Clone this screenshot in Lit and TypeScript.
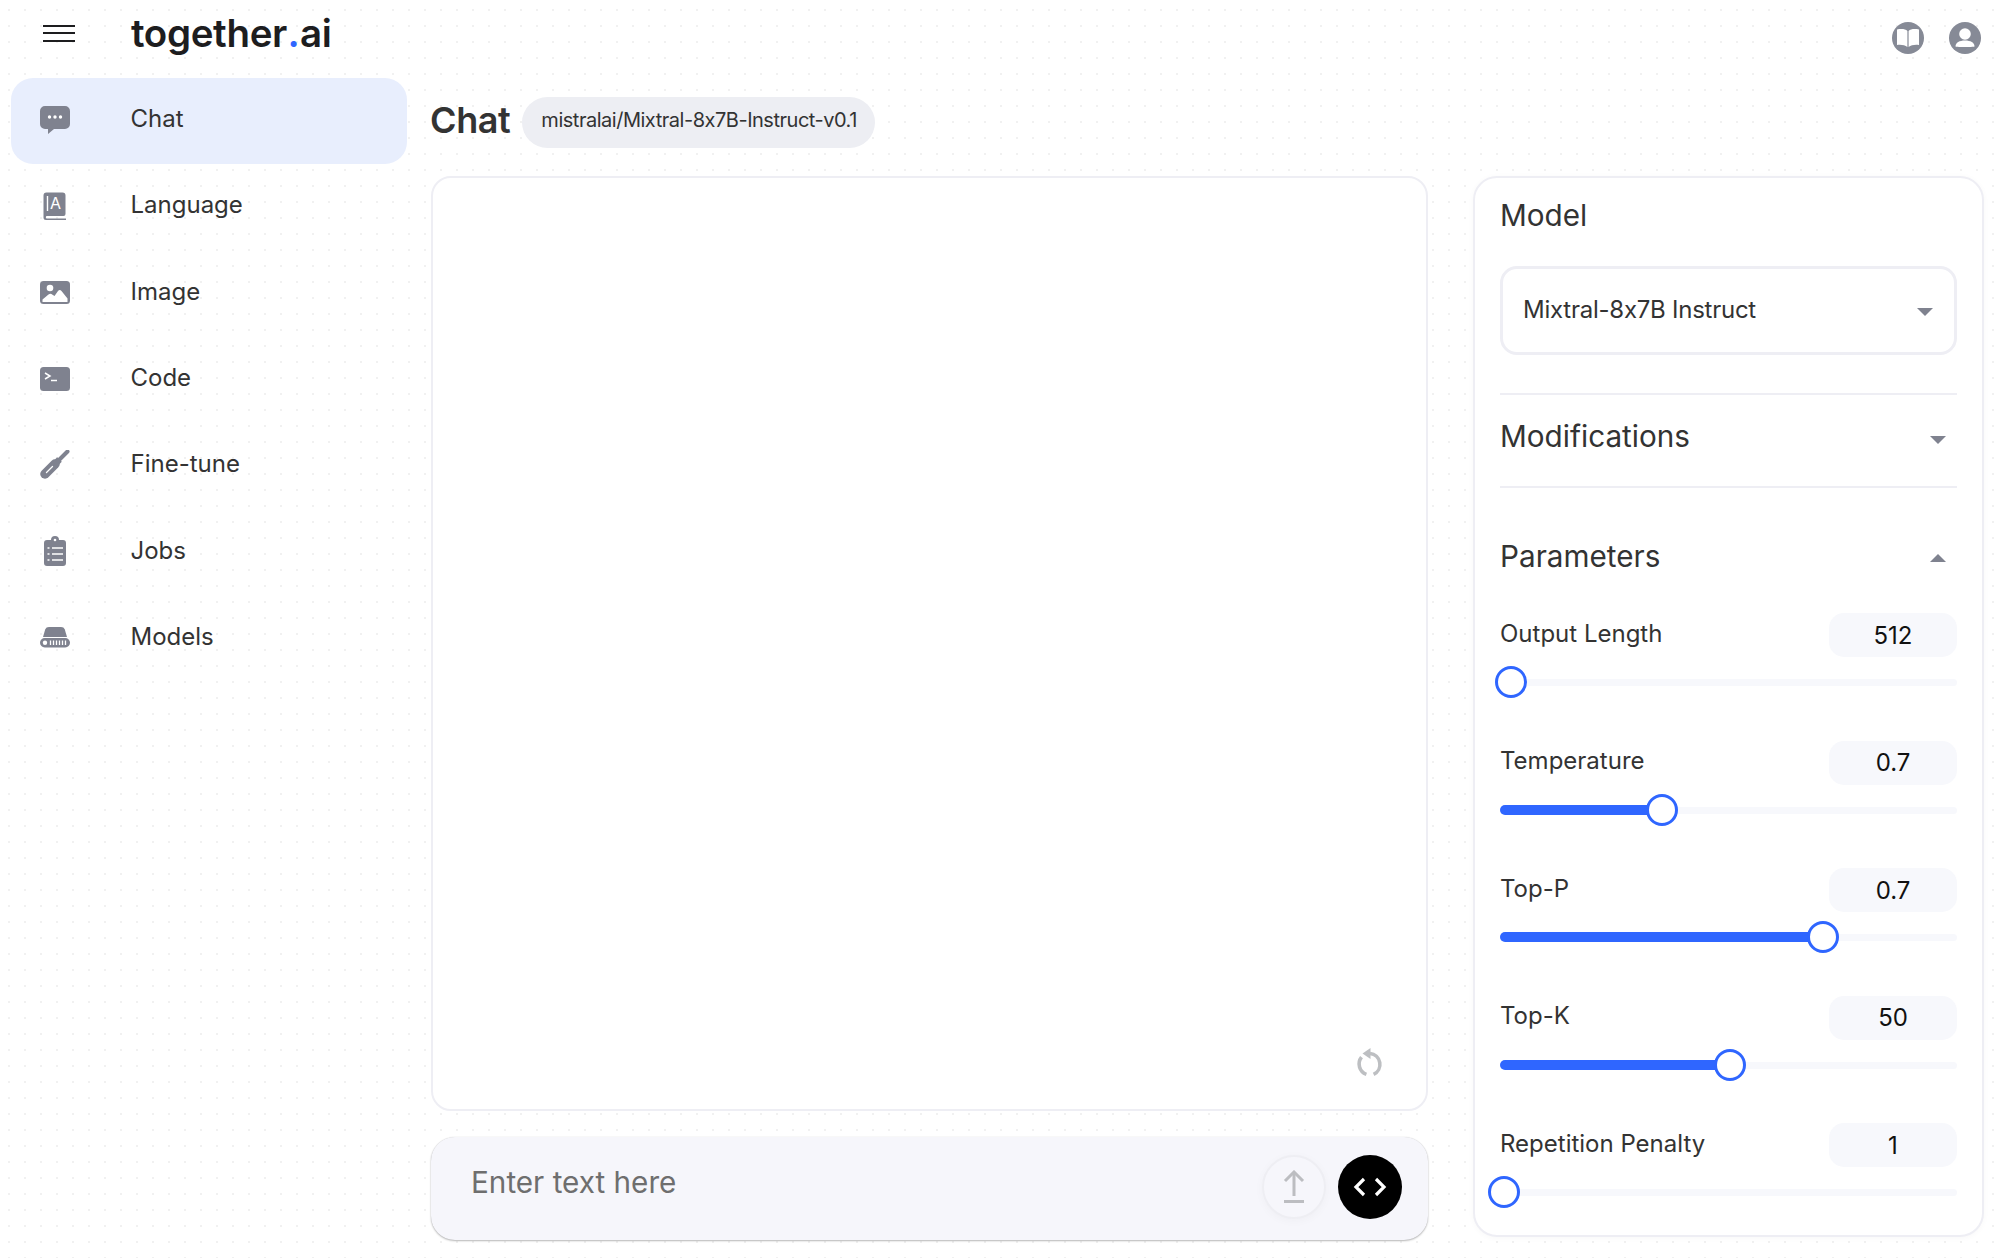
import { LitElement, html, css, svg } from "lit";
import { customElement } from "lit/decorators.js";

const icons: Record<string, unknown> = {
  chat: svg`<svg class="ico" viewBox="0 0 30 30"><path d="M5 1h20a5 5 0 0 1 5 5v13a5 5 0 0 1-5 5H14l-6 5v-5H5a5 5 0 0 1-5-5V6a5 5 0 0 1 5-5z" fill="#7f828f"/><g fill="#fff"><circle cx="9.500" cy="12" r="1.700"/><circle cx="15" cy="12" r="1.700"/><circle cx="20.500" cy="12" r="1.700"/></g></svg>`,
  language: svg`<svg class="ico" viewBox="0 0 30 30"><path d="M6.500 1.500h16a3 3 0 0 1 3 3V23a2 2 0 0 1-2 2H7a1.200 1.200 0 0 0 0 2.400h19V29H6a2.500 2.500 0 0 1-2.500-2.500v-22a3 3 0 0 1 3-3z" fill="#7f828f"/><path d="M7.500 5v15" stroke="#fff" stroke-width="1.400"/><text x="15.500" y="18" font-family="Inter" font-size="16" text-anchor="middle" fill="#fff">A</text></svg>`,
  image: svg`<svg class="ico" viewBox="0 0 30 30"><rect y="4" width="30" height="23" rx="3.500" fill="#7f828f"/><circle cx="10" cy="11" r="3.300" fill="#fff"/><path d="M2.500 25v-2.500l6-5c1.500-1 2.500-1 4 .2l2 1.300 3.500-5c1-1.200 2.500-1.200 3.500 0l6 7.500V25z" fill="#fff"/></svg>`,
  code: svg`<svg class="ico" viewBox="0 0 30 30"><rect y="3" width="30" height="24" rx="3.500" fill="#7f828f"/><path d="M5 9l5 3-5 3" fill="none" stroke="#fff" stroke-width="1.500"/><path d="M11 16.500h6" stroke="#fff" stroke-width="1.500"/></svg>`,
  tune: svg`<svg class="ico" viewBox="0 0 30 30"><path d="M5 24l10-10" stroke="#7f828f" stroke-width="9.500" stroke-linecap="round"/><path d="M14 15l5.500-5.500" stroke="#7f828f" stroke-width="6.500"/><path d="M18 11L27.500 1.500" stroke="#7f828f" stroke-width="4" stroke-linecap="round"/><path d="M6.500 22.500l6-6" stroke="#fff" stroke-width="1.300" stroke-linecap="round"/></svg>`,
  jobs: svg`<svg class="ico" viewBox="0 0 30 30"><path d="M7 4h4a4 4 0 0 1 8 0h4a3 3 0 0 1 3 3v20a3 3 0 0 1-3 3H7a3 3 0 0 1-3-3V7a3 3 0 0 1 3-3z" fill="#7f828f"/><circle cx="15" cy="4" r="1.300" fill="#fff"/><g stroke="#fff" stroke-width="1.300"><path d="M7.500 12h2M12 12h11M7.500 18h2M12 18h11M7.500 24h2M12 24h11"/></g></svg>`,
  models: svg`<svg class="ico" viewBox="0 0 30 30"><path d="M9 5h12c2 0 3 .8 3.800 2.500L27 15H3l2.200-7.500C6 5.800 7 5 9 5z" fill="#7f828f"/><rect y="16" width="30" height="9.500" rx="4.700" fill="#7f828f"/><circle cx="5" cy="20.700" r="2.200" fill="#fff"/><path d="M10.500 18.500v4.500M13.500 18.500v4.500M16.500 18.500v4.500M19.500 18.500v4.500M22.500 18.500v4.500M25.500 18.500v4.500" stroke="#fff" stroke-width="1.300"/></svg>`,
};

const nav = [
  ["chat", "Chat"],
  ["language", "Language"],
  ["image", "Image"],
  ["code", "Code"],
  ["tune", "Fine-tune"],
  ["jobs", "Jobs"],
  ["models", "Models"],
];

const params = [
  { label: "Output Length", value: "512", thumb: 11, fill: 0 },
  { label: "Temperature", value: "0.7", thumb: 162, fill: 1 },
  { label: "Top-P", value: "0.7", thumb: 323, fill: 1 },
  { label: "Top-K", value: "50", thumb: 230, fill: 1 },
  { label: "Repetition Penalty", value: "1", thumb: 3.500, fill: 0 },
];

@customElement("app-root")
export class AppRoot extends LitElement {
  static styles = css`
    :host {
      display: flex;
      flex-direction: column;
      width: 2000px;
      height: 1258px;
      overflow: hidden;
      font-family: Inter, "Liberation Sans", sans-serif;
      font-feature-settings: "calt" 0;
      color: #2e2e2e;
      background-color: #fff;
      background-image: radial-gradient(circle, #f1f1f1 1.200px, transparent 1.500px);
      background-size: 16px 16px;
      background-position: 1px 2px;
    }
    .top {
      height: 78px;
      flex: none;
      display: flex;
      align-items: center;
      padding: 0 19px 12px 43px;
      box-sizing: border-box;
    }
    .burger {
      width: 32px;
      display: flex;
      flex-direction: column;
      gap: 5.500px;
    }
    .burger i {
      display: block;
      height: 2px;
      background: #1d1d1f;
    }
    .logo {
      margin-left: 56px;
      font-size: 38.500px;
      font-weight: 600;
      letter-spacing: -0.35px;
      color: #1d1d1f;
      line-height: 46px;
    }
    .logo b {
      font-weight: 600;
      color: #2f66ff;
      margin: 0 0.500px;
    }
    .right {
      margin-left: auto;
      margin-top: 10px;
      display: flex;
      gap: 25px;
    }
    .right svg {
      width: 32px;
      height: 32px;
      display: block;
    }
    .body {
      flex: 1;
      min-height: 0;
      display: flex;
      padding-bottom: 18px;
    }
    .side {
      width: 431px;
      flex: none;
      box-sizing: border-box;
      padding-left: 11px;
    }
    .item {
      width: 396px;
      height: 86.300px;
      display: flex;
      align-items: center;
      border-radius: 22px;
      padding: 0 0 3px 29px;
      box-sizing: border-box;
      font-size: 24px;
      color: #333;
    }
    .item span {
      margin-bottom: 2px;
      margin-left: -0.500px;
    }
    .item.on {
      background: #e8eefd;
    }
    .ico {
      width: 30px;
      height: 30px;
      flex: none;
      margin-right: 61px;
    }
    .content {
      flex: 1;
      min-width: 0;
      display: flex;
      flex-direction: column;
    }
    .head {
      display: flex;
      align-items: center;
      margin-top: 19px;
      height: 51px;
      flex: none;
    }
    h1 {
      margin: 0 0 6px -1px;
      font-size: 36px;
      font-weight: 600;
      color: #333;
      letter-spacing: -0.4px;
    }
    .chip {
      margin-left: 12px;
      height: 51px;
      padding: 0 18px 5px 19px;
      box-sizing: border-box;
      display: flex;
      align-items: center;
      border-radius: 26px;
      background: #edeef3;
      font-size: 20px;
      letter-spacing: -0.48px;
      color: #333;
    }
    .cols {
      flex: 1;
      min-height: 0;
      margin-top: 28px;
      display: flex;
      gap: 44px;
    }
    .chatcol {
      width: 998px;
      flex: none;
      display: flex;
      flex-direction: column;
      gap: 26px;
    }
    .log {
      flex: 1;
      margin-right: 1px;
      background: #fff;
      border: 2px solid #eeeef4;
      border-radius: 20px;
      box-sizing: border-box;
      display: flex;
      justify-content: flex-end;
      align-items: flex-end;
      padding: 0 41px 29px 0;
    }
    .refresh {
      width: 30px;
      height: 32px;
      display: block;
    }
    .input {
      height: 103px;
      flex: none;
      margin-right: 1px;
      background: #f6f6fb;
      border-radius: 24px;
      box-sizing: border-box;
      box-shadow: 0 1px 2px rgba(0, 0, 0, 0.28), 0 0 1px rgba(0, 0, 0, 0.16);
      display: flex;
      align-items: center;
      padding: 0 26px 3px 40px;
    }
    .ph {
      flex: 1;
      font-size: 29.700px;
      color: #6e6e6e;
      margin-top: -11px;
    }
    .btn {
      width: 64px;
      height: 64px;
      border-radius: 50%;
      box-sizing: border-box;
      display: flex;
      align-items: center;
      justify-content: center;
      flex: none;
    }
    .up {
      border: 2px solid #eeeef3;
      background: #f6f6fb;
      margin-right: 12px;
      box-shadow: 0 2px 10px rgba(0, 0, 0, 0.03);
    }
    .send {
      background: #000;
    }
    .btn svg {
      display: block;
    }
    .panel {
      width: 511px;
      flex: none;
      margin-bottom: 3px;
      box-sizing: border-box;
      background: #fff;
      border: 2px solid #eeeef4;
      border-radius: 24px;
      padding: 19px 25px 0;
      box-shadow: 0 1px 6px rgba(0, 0, 0, 0.03);
    }
    .ttl {
      font-size: 29.700px;
      line-height: 36px;
      color: #333;
      font-weight: 400;
      display: flex;
      align-items: center;
      justify-content: space-between;
    }
    .select {
      margin-top: 33px;
      height: 89px;
      border: 3px solid #eeeef4;
      border-radius: 17px;
      box-sizing: border-box;
      display: flex;
      align-items: center;
      justify-content: space-between;
      padding: 0 21px 2px 20px;
      font-size: 24px;
      letter-spacing: -0.25px;
      color: #333;
    }
    .arrow {
      width: 16px;
      height: 8px;
      display: block;
      flex: none;
    }
    .select .arrow {
      margin-top: 5px;
    }
    .mod .arrow {
      margin-top: 8px;
    }
    .params .arrow {
      margin-top: 4px;
    }
    .rule {
      height: 2px;
      background: #eeeef4;
      margin-top: 38px;
    }
    .mod {
      margin-top: 23px;
      margin-bottom: 32px;
      padding-right: 11px;
    }
    .rule2 {
      height: 2px;
      background: #eeeef4;
    }
    .params {
      margin-top: 50px;
      padding-right: 11px;
    }
    .rows {
      margin-top: 39px;
      display: flex;
      flex-direction: column;
      gap: 42.500px;
    }
    .hdr {
      height: 44px;
      display: flex;
      align-items: center;
      justify-content: space-between;
    }
    .lbl {
      font-size: 24px;
      color: #333;
      margin-top: -4px;
    }
    .val {
      width: 128px;
      height: 44px;
      border-radius: 15px;
      background: #f7f8fc;
      display: flex;
      align-items: center;
      justify-content: center;
      font-size: 24px;
      color: #111;
    }
    .slider {
      position: relative;
      height: 32px;
      margin-top: 9px;
    }
    .track {
      position: absolute;
      left: 0;
      right: 0;
      top: 13px;
      height: 7px;
      border-radius: 3.500px;
      background: #f7f8fc;
    }
    .fill {
      position: absolute;
      left: 0;
      top: 11px;
      height: 10px;
      border-radius: 5px;
      background: #2f66ff;
    }
    .thumb {
      position: absolute;
      top: 0;
      width: 32px;
      height: 32px;
      box-sizing: border-box;
      border-radius: 50%;
      border: 3.500px solid #2f66ff;
      background: #fff;
      transform: translateX(-16px);
    }
  `;

  private down() {
    return html`<svg class="arrow" viewBox="0 0 16 8"><path d="M0 0h16L8 8z" fill="#7f828f"/></svg>`;
  }

  private up() {
    return html`<svg class="arrow" viewBox="0 0 16 8"><path d="M0 8h16L8 0z" fill="#7f828f"/></svg>`;
  }

  render() {
    return html`
      <div class="top">
        <div class="burger"><i></i><i></i><i></i></div>
        <div class="logo">together<b>.</b>ai</div>
        <div class="right">
          <svg viewBox="0 0 32 32">
            <circle cx="16" cy="16" r="16" fill="#868a96" />
            <path d="M5 7.500c4-.7 8.500-.7 10.400 1.500V25c-2.500-2-6.400-2.500-10.400-2z" fill="#fff" />
            <path d="M27 7.500c-4-.7-8.500-.7-10.400 1.500V25c2.500-2 6.400-2.500 10.400-2z" fill="#fff" />
          </svg>
          <svg viewBox="0 0 32 32">
            <circle cx="16" cy="16" r="16" fill="#868a96" />
            <circle cx="16" cy="12" r="5.800" fill="#fff" />
            <path d="M6.500 24.500c0-4 4-6 9.500-6s9.500 2 9.500 6c-2 .8-17 .8-19 0z" fill="#fff" />
          </svg>
        </div>
      </div>
      <div class="body">
        <div class="side">
          ${nav.map(
            ([k, t], i) => html`<div class="item ${i === 0 ? "on" : ""}">${icons[k]}<span>${t}</span></div>`
          )}
        </div>
        <div class="content">
          <div class="head">
            <h1>Chat</h1>
            <div class="chip">mistralai/Mixtral-8x7B-Instruct-v0.1</div>
          </div>
          <div class="cols">
            <div class="chatcol">
              <div class="log">
                <svg class="refresh" viewBox="0 0 30 32">
                  <path d="M15 5.500A11 11 0 0 1 18.600 26.400M11.400 26.400A11 11 0 0 1 6.500 9.200" fill="none" stroke="#bdbfc2" stroke-width="3.600" />
                  <path d="M15.500 0V11L7.500 5.500z" fill="#bdbfc2" />
                </svg>
              </div>
              <div class="input">
                <div class="ph">Enter text here</div>
                <div class="btn up">
                  <svg width="22" height="34" viewBox="0 0 22 34">
                    <path d="M11 3v23" stroke="#bcbdc1" stroke-width="3" />
                    <path d="M2 11l9-9 9 9" fill="none" stroke="#bcbdc1" stroke-width="3" />
                    <path d="M1 31.500h20" stroke="#bcbdc1" stroke-width="3" />
                  </svg>
                </div>
                <div class="btn send">
                  <svg width="34" height="20" viewBox="0 0 34 20">
                    <path d="M11 2L3 10l8 8M23 2l8 8-8 8" fill="none" stroke="#fff" stroke-width="3.200" />
                  </svg>
                </div>
              </div>
            </div>
            <div class="panel">
              <div class="ttl">Model</div>
              <div class="select"><span>Mixtral-8x7B Instruct</span>${this.down()}</div>
              <div class="rule"></div>
              <div class="ttl mod"><span>Modifications</span>${this.down()}</div>
              <div class="rule2"></div>
              <div class="ttl params"><span>Parameters</span>${this.up()}</div>
              <div class="rows">
                ${params.map(
                  (p) => html`
                    <div>
                      <div class="hdr">
                        <span class="lbl">${p.label}</span>
                        <span class="val">${p.value}</span>
                      </div>
                      <div class="slider">
                        <div class="track"></div>
                        ${p.fill ? html`<div class="fill" style="width:${p.thumb}px"></div>` : ""}
                        <div class="thumb" style="left:${p.thumb}px"></div>
                      </div>
                    </div>
                  `
                )}
              </div>
            </div>
          </div>
        </div>
      </div>
    `;
  }
}
